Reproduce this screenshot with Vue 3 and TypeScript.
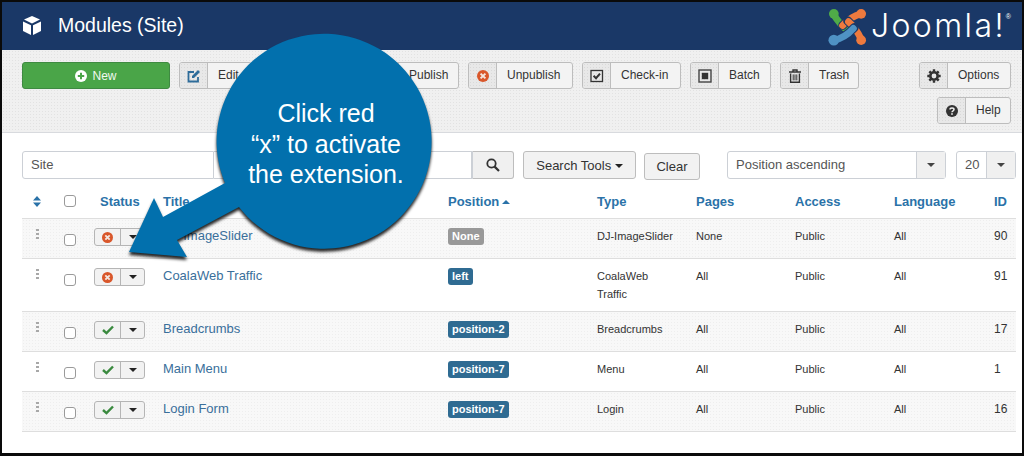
<script setup lang="ts">
interface ToolButton { label: string; icon: string; width: number }
interface ModuleRow { title: string; on: boolean; pos: string; type: string; pages: string; id: number }

const leftButtons: ToolButton[] = [
  { label: 'Edit', icon: 'edit', width: 73 },
  { label: 'Duplicate', icon: 'check', width: 100 },
  { label: 'Publish', icon: 'check', width: 89 },
  { label: 'Unpublish', icon: 'unpub', width: 105 },
  { label: 'Check-in', icon: 'checkin', width: 99 },
  { label: 'Batch', icon: 'batch', width: 81 },
  { label: 'Trash', icon: 'trash', width: 79 },
]
const rightButtons: ToolButton[] = [
  { label: 'Options', icon: 'gear', width: 92 },
  { label: 'Help', icon: 'help', width: 74 },
]
const columns = ['Status', 'Title', 'Position', 'Type', 'Pages', 'Access', 'Language', 'ID']
const rows: ModuleRow[] = [
  { title: 'DJ-ImageSlider', on: false, pos: 'None', type: 'DJ-ImageSlider', pages: 'None', id: 90 },
  { title: 'CoalaWeb Traffic', on: false, pos: 'left', type: 'CoalaWeb Traffic', pages: 'All', id: 91 },
  { title: 'Breadcrumbs', on: true, pos: 'position-2', type: 'Breadcrumbs', pages: 'All', id: 17 },
  { title: 'Main Menu', on: true, pos: 'position-7', type: 'Menu', pages: 'All', id: 1 },
  { title: 'Login Form', on: true, pos: 'position-7', type: 'Login', pages: 'All', id: 16 },
]
</script>

<template>
  <div class="page">
    <header class="topbar">
      <svg class="cube" viewBox="0 0 18 19" width="18" height="19">
        <path d="M9 0 17 3.6 9 7.4 1 3.6Z" fill="#fff" />
        <path d="M0 5.4 8 9.2V19L0 15Z" fill="#fff" />
        <path d="M18 5.4 10 9.2V19L18 15Z" fill="#fff" />
      </svg>
      <h1 class="heading">Modules (Site)</h1>
      <div class="brand">
        <svg class="mark" viewBox="0 0 40 40" width="39" height="39">
          <g fill="none" stroke-linecap="round" stroke-linejoin="round">
            <path d="M6 8Q12 18 21 25" stroke="#4fab48" stroke-width="7" />
            <path d="M34 7Q23 10 15 19" stroke="#1a3867" stroke-width="9" />
            <path d="M34 7Q23 10 15 19" stroke="#ee7a3e" stroke-width="7" />
            <path d="M34 33Q29 22 20 14" stroke="#1a3867" stroke-width="9" />
            <path d="M34 33Q29 22 21 15" stroke="#ee7a3e" stroke-width="7" />
            <path d="M6 34Q17 32 27 21" stroke="#1a3867" stroke-width="9" />
            <path d="M6 34Q17 32 26 22" stroke="#4f92c4" stroke-width="7" />
          </g>
          <circle cx="6" cy="7" r="5" fill="#4fab48" />
          <circle cx="34" cy="7" r="5" fill="#ee7a3e" />
          <circle cx="6" cy="34" r="5.5" fill="#4f92c4" />
          <circle cx="34" cy="34" r="5" fill="#ee7a3e" />
        </svg>
        <span class="wordmark">Joomla!</span><sup class="reg">®</sup>
      </div>
    </header>

    <section class="toolbar">
      <div class="tool-left">
        <button class="btn-new">
          <svg viewBox="0 0 12 12" width="12" height="12">
            <circle cx="6" cy="6" r="6" fill="#fff" />
            <path d="M6 2.8V9.2M2.8 6H9.2" stroke="#4aa548" stroke-width="2" />
          </svg>
          New
        </button>
        <button v-for="b in leftButtons" :key="b.label" class="tool" :style="{ width: b.width + 'px' }">
          <span class="tool-icon">
            <svg v-if="b.icon === 'edit'" viewBox="0 0 14 14" width="14" height="14">
              <path d="M11 8V12.5H1.5V3H7" fill="none" stroke="#2e6c9a" stroke-width="1.8" />
              <path d="M5 7 11 1 13 3 7 9H5Z" fill="#2e6c9a" />
            </svg>
            <svg v-else-if="b.icon === 'check'" viewBox="0 0 14 14" width="14" height="14">
              <path d="M2 7 5.5 10.5 12 3.5" fill="none" stroke="#3a8a3f" stroke-width="2.4" />
            </svg>
            <svg v-else-if="b.icon === 'unpub'" viewBox="0 0 12 12" width="12" height="12">
              <circle cx="6" cy="6" r="6" fill="#d9572b" />
              <path d="M3.6 3.6 8.4 8.4M8.4 3.6 3.6 8.4" stroke="#f4e6df" stroke-width="2" />
            </svg>
            <svg v-else-if="b.icon === 'checkin'" viewBox="0 0 14 14" width="14" height="14">
              <rect x="1" y="1.5" width="11.5" height="11" fill="none" stroke="#333" stroke-width="1.3" />
              <path d="M3.6 6.8 6 9.2 10 4.6" fill="none" stroke="#333" stroke-width="2" />
            </svg>
            <svg v-else-if="b.icon === 'batch'" viewBox="0 0 14 14" width="14" height="14">
              <rect x="1" y="1" width="12" height="12" fill="none" stroke="#444" stroke-width="1.4" />
              <rect x="3.8" y="3.8" width="6.4" height="6.4" fill="#333" />
            </svg>
            <svg v-else-if="b.icon === 'trash'" viewBox="0 0 12 14" width="12" height="14">
              <path d="M0 3H12M4 2.6V1H8V2.6" fill="none" stroke="#333" stroke-width="1.4" />
              <path d="M1.6 4.4V13.2H10.4V4.4" fill="none" stroke="#333" stroke-width="1.4" />
              <path d="M4.2 5.4V11.4M6 5.4V11.4M7.8 5.4V11.4" stroke="#333" stroke-width="1" />
            </svg>
          </span>
          <span class="tool-label">{{ b.label }}</span>
        </button>
      </div>
      <div class="tool-right">
        <button v-for="b in rightButtons" :key="b.label" class="tool" :style="{ width: b.width + 'px' }">
          <span class="tool-icon">
            <svg v-if="b.icon === 'gear'" viewBox="0 0 14 14" width="14" height="14">
              <circle cx="7" cy="7" r="3.7" fill="none" stroke="#333" stroke-width="2.6" />
              <path d="M7 0.3V2.6M7 11.4V13.7M0.3 7H2.6M11.4 7H13.7M2.3 2.3 3.9 3.9M10.1 10.1 11.7 11.7M11.7 2.3 10.1 3.9M3.9 10.1 2.3 11.7" stroke="#333" stroke-width="2.4" />
            </svg>
            <svg v-else viewBox="0 0 12 12" width="12" height="12">
              <circle cx="6" cy="6" r="6" fill="#333" />
              <path d="M4 4.6C4 2.6 8 2.6 8 4.6 8 5.9 6 5.7 6 7.3" fill="none" stroke="#f0f0f0" stroke-width="1.5" />
              <rect x="5.2" y="8.2" width="1.6" height="1.6" fill="#f0f0f0" />
            </svg>
          </span>
          <span class="tool-label">{{ b.label }}</span>
        </button>
      </div>
    </section>

    <main class="content">
      <div class="filters">
        <div class="field site">
          <span class="field-text">Site</span>
        </div>
        <div class="field search"></div>
        <button class="search-btn">
          <svg viewBox="0 0 14 14" width="14" height="14">
            <circle cx="5.5" cy="5.5" r="4.2" fill="none" stroke="#333" stroke-width="1.8" />
            <path d="M8.6 8.6 13 13" stroke="#333" stroke-width="2.2" />
          </svg>
        </button>
        <button class="plain tools">Search Tools <i class="caret"></i></button>
        <button class="plain clear">Clear</button>
        <div class="field order">
          <span class="field-text">Position ascending</span>
          <span class="caret-box"><i class="caret small"></i></span>
        </div>
        <div class="field limit">
          <span class="field-text">20</span>
          <span class="caret-box"><i class="caret small"></i></span>
        </div>
      </div>

      <div class="table">
        <div class="row head">
          <div class="cell">
            <svg class="sort" viewBox="0 0 8 11" width="8" height="11">
              <path d="M4 0 8 4.4H0ZM4 11 0 6.6H8Z" fill="#2a72a8" />
            </svg>
          </div>
          <div class="cell"><span class="box head-box"></span></div>
          <div v-for="c in columns" :key="c" class="cell" :class="{ 'status-head': c === 'Status' }">
            {{ c }}<i v-if="c === 'Position'" class="caret up"></i>
          </div>
        </div>
        <div v-for="r in rows" :key="r.id" class="row item">
          <div class="cell"><span class="grip"></span></div>
          <div class="cell"><span class="box"></span></div>
          <div class="cell">
            <span class="state">
              <span class="state-main">
                <svg v-if="r.on" viewBox="0 0 12 10" width="12" height="10">
                  <path d="M1 5 4.5 8.2 11 1.5" fill="none" stroke="#3a8a3f" stroke-width="2.4" />
                </svg>
                <svg v-else viewBox="0 0 11 11" width="11" height="11">
                  <circle cx="5.5" cy="5.5" r="5.5" fill="#d9572b" />
                  <path d="M3.3 3.3 7.7 7.7M7.7 3.3 3.3 7.7" stroke="#f4e6df" stroke-width="1.8" />
                </svg>
              </span>
              <span class="state-drop"><i class="caret"></i></span>
            </span>
          </div>
          <div class="cell title">{{ r.title }}</div>
          <div class="cell"><span class="badge" :class="{ none: r.pos === 'None' }">{{ r.pos }}</span></div>
          <div class="cell small-text type">{{ r.type }}</div>
          <div class="cell small-text">{{ r.pages }}</div>
          <div class="cell small-text">Public</div>
          <div class="cell small-text">All</div>
          <div class="cell id">{{ r.id }}</div>
        </div>
      </div>
    </main>

    <div class="callout">
      <svg class="callout-shape" viewBox="0 0 1024 456" width="1024" height="456">
        <path
          d="M154 198 163 217 225 183A107.5 107.5 0 1 1 239 207L177 240 187 257 129 252Z"
          fill="#0270ad"
        />
      </svg>
      <p class="callout-text">Click red<br />“x” to activate<br />the extension.</p>
    </div>
  </div>
</template>

<style>
html, body { margin: 0; background: #000; }
</style>

<style scoped>
.page {
  position: relative;
  box-sizing: border-box;
  width: 1024px;
  height: 456px;
  overflow: hidden;
  display: flex;
  flex-direction: column;
  border-style: solid;
  border-color: #0a0a0a;
  border-width: 2px 2px 3px 2px;
  background: #fff;
  font-family: "Liberation Sans", Arial, sans-serif;
  color: #333;
}
button { font-family: inherit; margin: 0; padding: 0; cursor: pointer; }

.topbar {
  height: 48px;
  flex: none;
  display: flex;
  align-items: center;
  background: #1a3867;
  padding-left: 21px;
  box-sizing: border-box;
}
.cube { flex: none; margin-top: -2px; }
.heading {
  margin: -1px 0 0 17px;
  font-size: 19.5px;
  font-weight: 400;
  color: #fff;
}
.brand {
  margin-left: auto;
  margin-right: 11px;
  display: flex;
  align-items: center;
  color: #fff;
}
.mark { flex: none; margin-right: 4px; }
.wordmark {
  font-family: "Inter", sans-serif;
  font-weight: 300;
  font-size: 32px;
  letter-spacing: 2.4px;
  line-height: 40px;
}
.reg { font-size: 7px; align-self: flex-start; margin: 7px 0 0 0; line-height: 8px; }

.toolbar {
  height: 83px;
  flex: none;
  box-sizing: border-box;
  display: flex;
  justify-content: space-between;
  padding: 12px 11px 0 20px;
  background-color: #f0f0f0;
  background-image: radial-gradient(#e2e2e2 0.6px, transparent 0.8px);
  background-size: 3px 3px;
  border-bottom: 1px solid #d8dade;
}
.tool-left { display: flex; gap: 9px; align-items: flex-start; flex: none; }
.tool-right { display: flex; flex-direction: column; align-items: flex-end; gap: 8px; flex: none; }
.btn-new {
  width: 148px;
  height: 27px;
  display: flex;
  align-items: center;
  justify-content: center;
  gap: 5px;
  border: 1px solid #3e8a41;
  border-radius: 3px;
  background: #4aa548;
  color: #f2f8f0;
  font-size: 12px;
}
.tool {
  display: flex;
  flex: none;
  height: 27px;
  box-sizing: border-box;
  border: 1px solid #bdbdbd;
  border-radius: 3px;
  background: #f3f3f3;
  overflow: hidden;
  color: #333;
  font-size: 12px;
}
.tool-icon {
  flex: none;
  width: 27px;
  display: flex;
  align-items: center;
  justify-content: center;
  border-right: 1px solid #bdbdbd;
  background-color: #e8e8e8;
  background-image: radial-gradient(#d9d9d9 0.6px, transparent 0.8px);
  background-size: 3px 3px;
}
.tool-label { padding-left: 10px; line-height: 25px; white-space: nowrap; }

.content { flex: 1; padding: 18px 6px 0 20px; }
.filters { display: flex; height: 29px; align-items: flex-start; }
.field {
  box-sizing: border-box;
  height: 28px;
  display: flex;
  align-items: stretch;
  border: 1px solid #ccd0d6;
  background: #fff;
  font-size: 13px;
  color: #555;
}
.field-text { flex: 1; line-height: 26px; padding-left: 8px; }
.site { width: 192px; border-radius: 3px 0 0 3px; }
.search { width: 258px; border-left: 0; }
.search-btn {
  width: 42px;
  height: 28px;
  border: 1px solid #bdbdbd;
  border-left: 1px solid #ccd0d6;
  border-radius: 0 3px 3px 0;
  background: #f0f0f0;
  display: flex;
  align-items: center;
  justify-content: center;
}
.plain {
  border: 1px solid #bdbdbd;
  border-radius: 3px;
  background: #f2f2f2;
  color: #333;
  font-size: 13px;
}
.tools { width: 113px; height: 28px; margin-left: 9px; }
.clear { width: 56px; height: 27px; margin: 2px 0 0 8px; }
.order { width: 219px; margin-left: 27px; border-radius: 3px; }
.limit { width: 60px; margin-left: 10px; border-radius: 3px; }
.caret-box {
  flex: none;
  width: 28px;
  display: flex;
  align-items: center;
  justify-content: center;
  border-left: 1px solid #ccd0d6;
  background: #f0f0f0;
}
.caret {
  display: inline-block;
  width: 0;
  height: 0;
  vertical-align: middle;
  border-left: 4px solid transparent;
  border-right: 4px solid transparent;
  border-top: 4px solid #222;
}
.caret.small { border-top-color: #444; }
.caret.up {
  border-top: 0;
  border-bottom: 4px solid #2a72a8;
  margin: -2px 0 0 3px;
}

.row {
  display: grid;
  grid-template-columns: 42px 30px 69px 285px 149px 99px 99px 99px 100px 22px;
}
.head {
  height: 38px;
  box-sizing: border-box;
  padding-top: 14px;
  color: #2a72a8;
  font-size: 13px;
  font-weight: 700;
}
.status-head { padding-left: 6px; }
.sort { display: block; margin: 2px 0 0 11px; }
.item {
  min-height: 40px;
  box-sizing: border-box;
  border-top: 1px solid #dedede;
  font-size: 11px;
  line-height: 18px;
  padding-bottom: 8px;
}
.item:nth-child(even) {
  background-color: #f8f8f8;
  background-image: radial-gradient(#eeeeee 0.6px, transparent 0.8px);
  background-size: 3px 3px;
}
.item:last-child { border-bottom: 1px solid #dedede; min-height: 41px; }
.item .cell { padding-top: 8px; }
.box {
  display: block;
  width: 10px;
  height: 10px;
  border: 1px solid #9a9a9a;
  border-radius: 3px;
  background: #fff;
  margin-top: 7px;
}
.head-box { margin-top: 1px; }
.grip {
  display: block;
  width: 3px;
  height: 11px;
  margin: 2px 0 0 14px;
  background-image: linear-gradient(#a8a8a8 2px, transparent 2px);
  background-size: 3px 4px;
}
.state {
  display: flex;
  width: 51px;
  height: 18px;
  box-sizing: border-box;
  margin-top: 1px;
  border: 1px solid #b5b5b5;
  border-radius: 3px;
  background: #f2f2f2;
  overflow: hidden;
}
.state-main {
  width: 25px;
  display: flex;
  align-items: center;
  justify-content: center;
  border-right: 1px solid #b5b5b5;
}
.state-drop { flex: 1; display: flex; align-items: center; justify-content: center; }
.title { font-size: 13px; color: #3a6f9b; }
.badge {
  display: inline-block;
  height: 17px;
  line-height: 17px;
  padding: 0 4px;
  border-radius: 3px;
  background: #2f6b92;
  color: #fff;
  font-weight: 700;
  font-size: 11px;
}
.badge.none { background: #999; }
.type { padding-right: 20px; }
.id { font-size: 12px; }

.callout {
  position: absolute;
  left: -2px;
  top: -2px;
  width: 1024px;
  height: 456px;
  pointer-events: none;
}
.callout-shape {
  display: block;
  filter: drop-shadow(0 3px 1.5px rgba(0, 0, 0, 0.85));
}
.callout-text {
  position: absolute;
  left: 217px;
  top: 98px;
  width: 218px;
  margin: 0;
  text-align: center;
  color: #fff;
  font-size: 25px;
  line-height: 30.5px;
}
</style>
